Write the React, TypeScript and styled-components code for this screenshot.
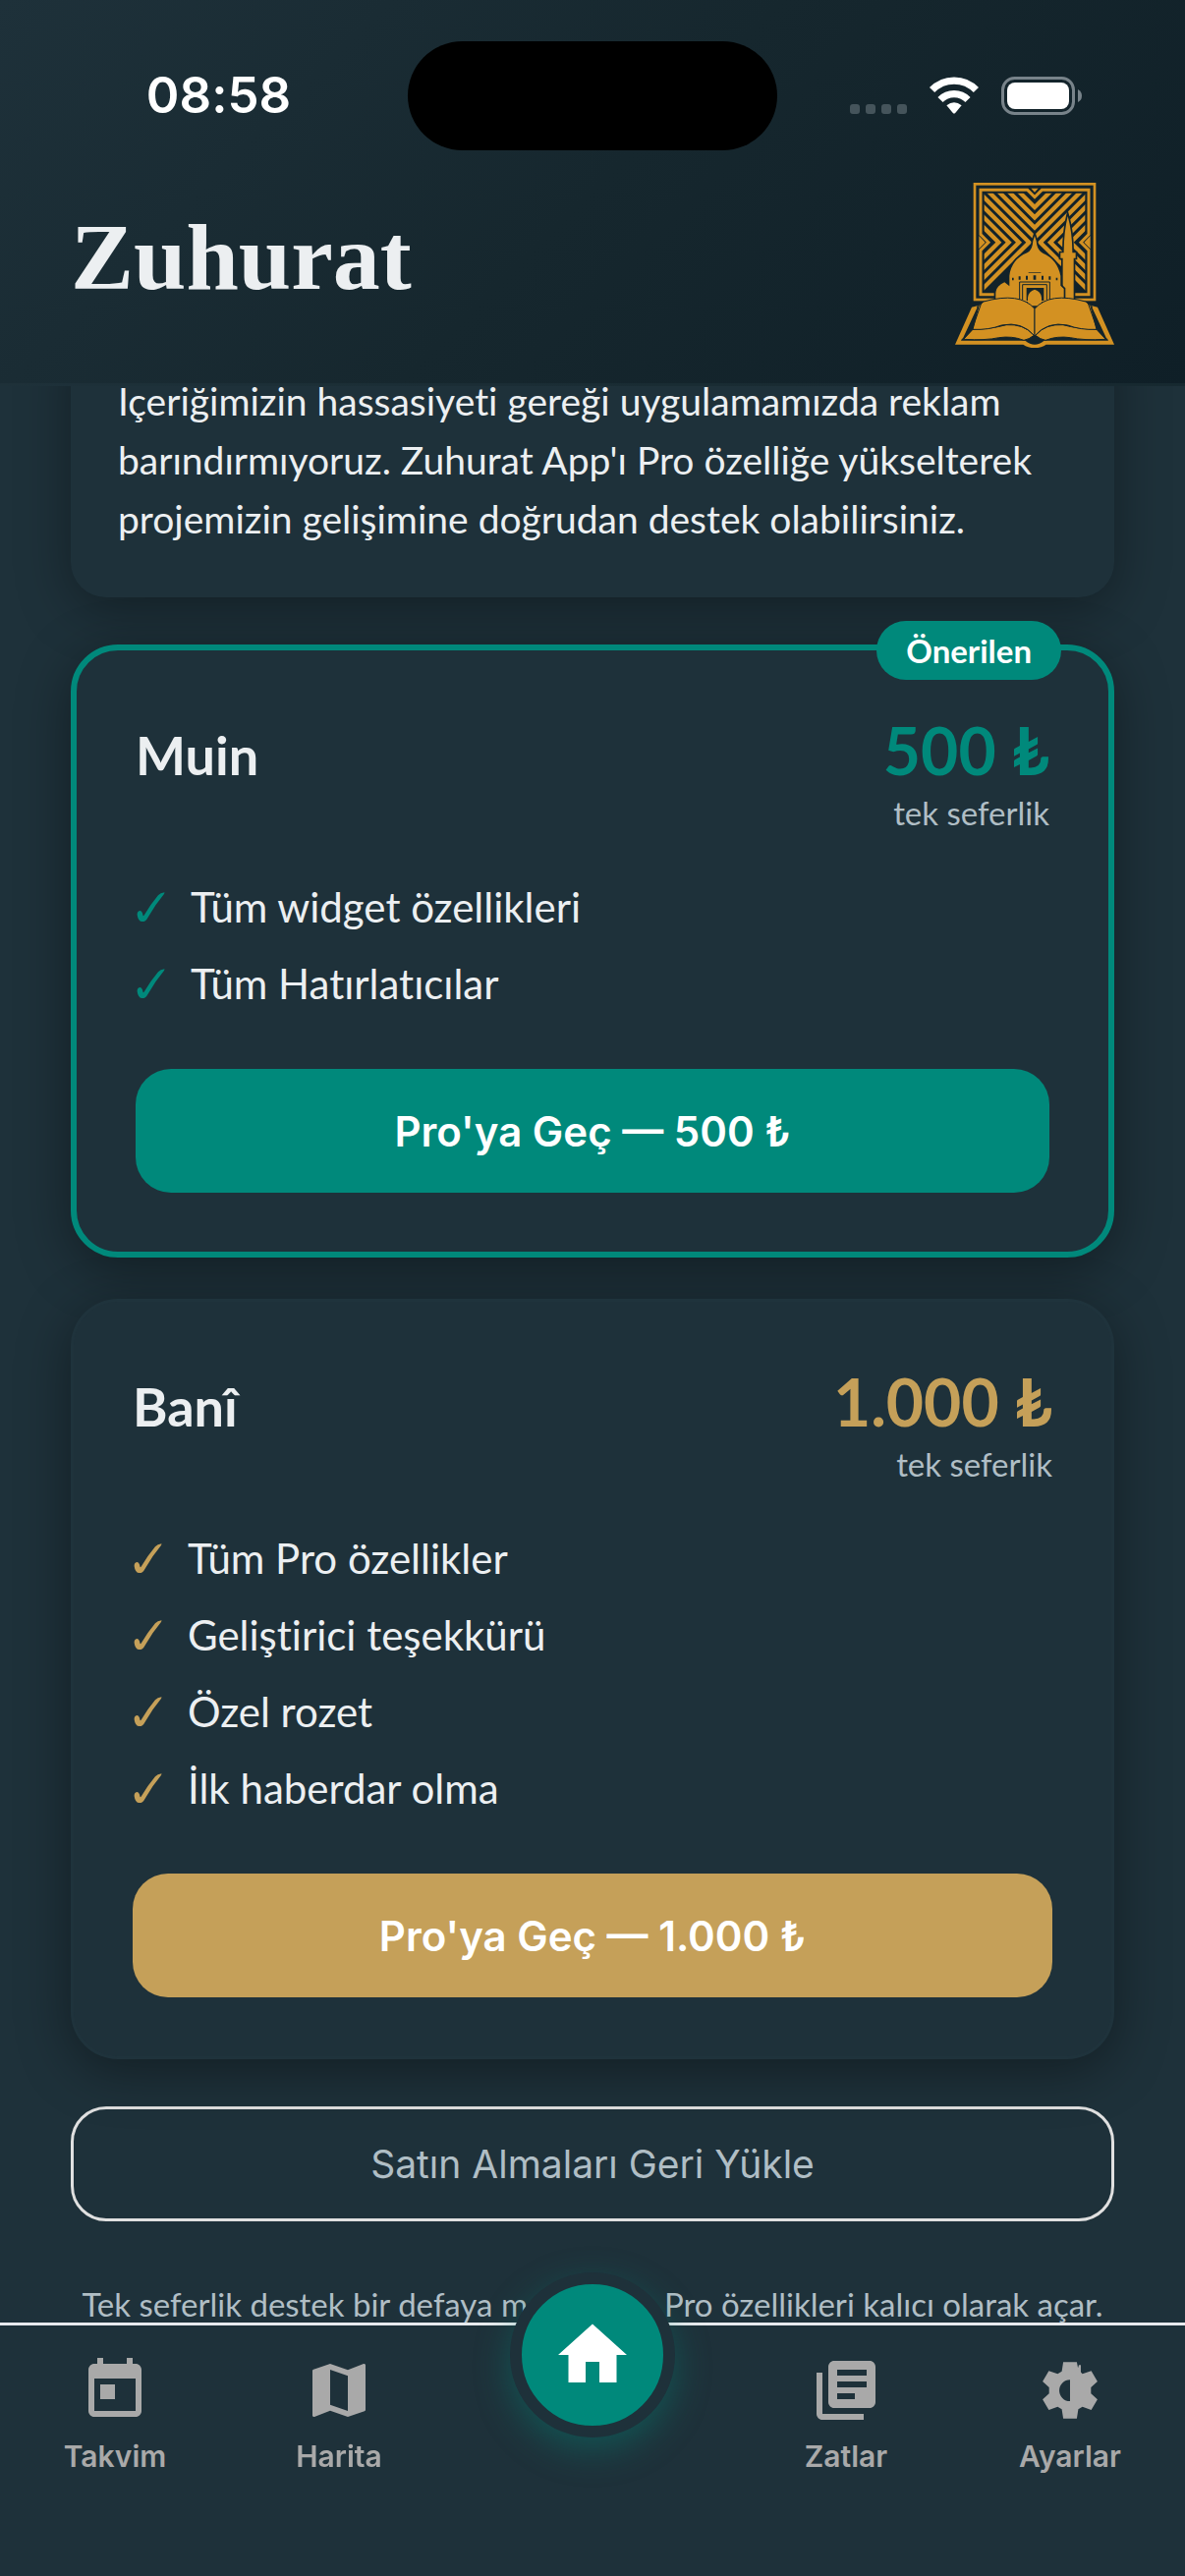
import React from "react";
import styled, { createGlobalStyle } from "styled-components";

const color = {
  surface: "#1e313a",
  text: "#eceff1",
  muted: "#b0bec5",
  teal: "#00897b",
  gold: "#c5a059",
  line: "#e0e0e0",
  tab: "#a9a9a9",
  emblem: "#d39122",
  night: "#13242b",
};

const bodyFont = `Lato, "Open Sans", "DejaVu Sans", sans-serif`;
const uiFont = `Inter, Roboto, "DejaVu Sans", sans-serif`;

const GlobalStyle = createGlobalStyle`
  * { box-sizing: border-box; }
  body {
    margin: 0;
    background: ${color.surface};
    color: ${color.text};
    font-family: ${bodyFont};
    font-variant-ligatures: none;
  }
  h1, h2, p, ul { margin: 0; padding: 0; }
  button { border: 0; cursor: pointer; }
`;

/* ---------- Header ---------- */

const Header = styled.header`
  position: fixed;
  inset: 0 0 auto 0;
  z-index: 2;
  padding-bottom: 36px;
  border-bottom: 3px solid rgba(30, 49, 58, 0.4);
  background: linear-gradient(135deg, #1e313a 0%, #16272e 50%, #0f1f27 100%);
`;

const StatusBar = styled.div`
  display: grid;
  grid-template-columns: 1fr 376px 1fr;
  align-items: center;
  height: 186px;
  padding-top: 8px;
  font-family: ${uiFont};
`;

const Clock = styled.time`
  justify-self: center;
  padding-left: 30px;
  font-size: 51px;
  font-weight: 600;
  line-height: 60px;
  color: #fff;
`;

const Island = styled.div`
  height: 111px;
  border-radius: 56px;
  background: #000;
`;

const StatusIcons = styled.div`
  display: flex;
  align-items: center;
  gap: 22px;
  padding-left: 74px;
`;

const TitleRow = styled.div`
  display: flex;
  align-items: center;
  justify-content: space-between;
  height: 168px;
  padding: 0 72px;
`;

const Title = styled.h1`
  padding-bottom: 16px;
  font-family: "Liberation Serif", serif;
  font-size: 96px;
  font-weight: 700;
  line-height: 120px;
`;

/* ---------- Content ---------- */

const Content = styled.main`
  display: flex;
  flex-direction: column;
  gap: 48px;
  padding: 330px 72px 0;
`;

const Intro = styled.section`
  padding: 48px 48px 50px;
  border-radius: 36px;
  background: ${color.surface};
  box-shadow: 0 12px 54px rgba(0, 0, 0, 0.35);
  font-size: 39px;
  line-height: 60px;
`;

const Plans = styled.div`
  display: flex;
  flex-direction: column;
  gap: 42px;
`;

const PlanCard = styled.section<{ $featured?: boolean }>`
  position: relative;
  padding: 60px;
  border: ${(p) => (p.$featured ? `6px solid ${color.teal}` : "3px solid rgba(38, 56, 65, 0.3)")};
  border-radius: 48px;
  background: ${color.surface};
  box-shadow: 0 12px 54px rgba(0, 0, 0, 0.38);
`;

const Badge = styled.span`
  position: absolute;
  top: -30px;
  right: 48px;
  padding: 0 30px;
  border-radius: 30px;
  background: ${color.teal};
  color: #fff;
  font-size: 33px;
  font-weight: 700;
  line-height: 60px;
`;

const PlanHead = styled.div`
  display: flex;
  align-items: baseline;
  justify-content: space-between;
  height: 126px;
`;

const PlanName = styled.h2`
  font-size: 54px;
  font-weight: 700;
  line-height: 68px;
`;

const PriceBox = styled.div`
  text-align: right;
`;

const Price = styled.p<{ $accent: string }>`
  color: ${(p) => p.$accent};
  font-size: 66px;
  font-weight: 700;
  line-height: 84px;
`;

const Period = styled.p`
  color: ${color.muted};
  font-size: 33px;
  line-height: 42px;
`;

const Features = styled.ul`
  display: flex;
  flex-direction: column;
  gap: 24px;
  margin: 48px 0 60px;
  list-style: none;
`;

const Feature = styled.li`
  display: grid;
  grid-template-columns: 32px 1fr;
  align-items: center;
  gap: 24px;
  font-size: 42px;
  line-height: 54px;
`;

const BuyButton = styled.button<{ $accent: string }>`
  display: block;
  width: 100%;
  height: 126px;
  border-radius: 36px;
  background: ${(p) => p.$accent};
  color: #fff;
  font-family: ${uiFont};
  font-size: 42px;
  font-weight: 600;
`;

const RestoreButton = styled.button`
  height: 117px;
  && { border: 3px solid ${color.line}; }
  border-radius: 36px;
  background: transparent;
  color: ${color.muted};
  font-family: ${uiFont};
  font-size: 39px;
`;

const Footnote = styled.p`
  padding-top: 15px;
  margin: 0 -24px;
  color: ${color.muted};
  font-size: 33px;
  line-height: 42px;
  text-align: center;
  white-space: nowrap;
`;

/* ---------- Tab bar ---------- */

const TabBar = styled.nav`
  position: fixed;
  inset: auto 0 0 0;
  z-index: 2;
  display: grid;
  grid-template-columns: 1fr 1fr 288px 1fr 1fr;
  justify-items: center;
  align-items: start;
  height: 258px;
  padding: 0 3px;
  border-top: 3px solid #e8eaed;
  background: ${color.surface};
`;

const Tab = styled.a`
  display: flex;
  flex-direction: column;
  align-items: center;
  gap: 12px;
  padding-top: 30px;
  color: ${color.tab};
  font-family: ${uiFont};
  font-size: 30px;
  font-weight: 600;
  line-height: 39px;
  text-decoration: none;
`;

const HomeButton = styled.button`
  display: grid;
  place-items: center;
  width: 168px;
  height: 168px;
  margin-top: -54px;
  padding: 0;
  && { border: 12px solid ${color.surface}; }
  border-radius: 50%;
  background: ${color.teal};
  box-shadow: 0 12px 36px rgba(0, 137, 123, 0.4);
`;

/* ---------- Drawings ---------- */

const Glyph = ({ d, size = 72, fill = "currentColor" }: { d: string; size?: number; fill?: string }) => (
  <svg width={size} height={size} viewBox="0 0 24 24" fill={fill} aria-hidden="true">
    <path d={d} />
  </svg>
);

const icons = {
  calendar:
    "M19 3h-1V1h-2v2H8V1H6v2H5c-1.11 0-1.99.9-1.99 2L3 19c0 1.1.89 2 2 2h14c1.1 0 2-.9 2-2V5c0-1.1-.9-2-2-2zm0 16H5V8h14v11zM7 10h5v5H7z",
  map: "M20.5 3l-.16.03L15 5.1 9 3 3.36 4.9c-.21.07-.36.25-.36.48V20.5c0 .28.22.5.5.5l.16-.03L9 18.9l6 2.1 5.64-1.9c.21-.07.36-.25.36-.48V3.5c0-.28-.22-.5-.5-.5zM15 19l-6-2.11V5l6 2.11V19z",
  home: "M10 20v-6h4v6h5v-8h3L12 3 2 12h3v8z",
  library:
    "M4 6H2v14c0 1.1.9 2 2 2h14v-2H4V6zm16-4H8c-1.1 0-2 .9-2 2v12c0 1.1.9 2 2 2h12c1.1 0 2-.9 2-2V4c0-1.1-.9-2-2-2zm-1 5H9V5h10v2zm-4 8H9v-2h6v2zm4-4H9V9h10v2z",
  settings:
    "M9.7 2.4H14.3L14.7 4.4 15 3.4H15.65V5.8L16.2 6.4 19.2 5.4 21.3 9 19.1 11V13.1L21.3 15.1 19.2 18.7 16.2 17.6 14.8 18.4 14.3 21.6H9.7L9.2 18.4 7.8 17.6 4.8 18.7 2.7 15.1 4.9 13.1V11L2.7 9 4.8 5.4 7.8 6.4 9.2 5.6ZM12 8.4a3.65 3.65 0 0 0 0 7.3z",
};

const Tick = ({ accent }: { accent: string }) => (
  <svg width="32" height="32" viewBox="0 0 99 99" fill={accent} role="img" aria-label="✓">
    <path d="M5 74Q5 64 13 62Q21 62 23 76Q24 80 27 76Q48 40 71 13Q78 5 91 4Q92 6 89 10Q62 42 38 84Q32 96 21 96Q8 96 5 74Z" />
  </svg>
);

const Signal = () => (
  <svg width="58" height="38" viewBox="0 0 58 38" fill="#45545b" aria-hidden="true">
    {[0, 16, 32, 48].map((x) => (
      <rect key={x} x={x} y="28" width="10" height="10" rx="3" />
    ))}
  </svg>
);

const Wifi = () => (
  <svg width="52" height="38" viewBox="0 0 52 38" aria-hidden="true">
    <g fill="none" stroke="#fff" strokeWidth="7.2">
      <path d="M3.6 13.6A31 31 0 0 1 48.4 13.6" />
      <path d="M12 23.6A19.6 19.6 0 0 1 40 23.6" />
    </g>
    <path d="M18.4 29.2Q26 23.4 33.6 29.2L27.2 37Q26 38 24.8 37Z" fill="#fff" />
  </svg>
);

const Battery = () => (
  <svg width="82" height="39" viewBox="0 0 82 39" aria-hidden="true">
    <rect x="1.5" y="1.5" width="72" height="36" rx="12" fill="none" stroke="#78838a" strokeWidth="3" />
    <rect x="6" y="6" width="63" height="27" rx="8" fill="#fff" />
    <path d="M78 13Q82 15 82 19.5T78 26Z" fill="#78838a" />
  </svg>
);

/* Lattice lines run at 45° and fold at the centre column and the middle row. */
const latticeV = [123, 154, 185, 216].map((y) => `M${309 - y} 0L309 ${y}L${309 + y} 0`);
const latticeSide = [292, 261, 230, 199].map(
  (x) =>
    `M${x - 230} 0L${x} 230L${x - 230} 460M${618 - x + 230} 0L${618 - x} 230L${618 - x + 230} 460`,
);

const Emblem = () => (
  <svg width="162" height="168" viewBox="66 48 486 504" role="img" aria-label="Zuhurat">
    <clipPath id="lattice">
      <path d="M155 80H463V379H155Z" />
    </clipPath>
    <g fill="none" stroke={color.emblem}>
      <rect x="126" y="52" width="366" height="353" strokeWidth="8" />
      <path
        d="M144 70H287L309 92L331 70H474V206L450 230L474 254V389H144V254L168 230L144 206Z"
        strokeWidth="9"
      />
      <path clipPath="url(#lattice)" d={[...latticeV, ...latticeSide].join("")} strokeWidth="13" />
    </g>
    <g fill={color.emblem}>
      <path d="M298 65H320L309 77Z" />
      <path d="M139 210L158 230L139 250ZM479 210L460 230L479 250Z" />
    </g>
    <g fill={color.emblem} stroke={color.night} strokeWidth="10" paintOrder="stroke">
      <path d="M410 150Q398 200 398 262H388V278H395V410H428V278H434V262H424Q424 200 410 150Z" />
      <path d="M190 412V385Q192 362 217 352L232 364V332Q238 282 286 262Q302 254 304 226L309 210L314 226Q316 254 334 263Q378 282 388 332V362L398 372V412Z" />
    </g>
    <g fill={color.night}>
      <path d="M240 338h5v8h-5zM260 334h6v10h-6zM282 332h6v12h-6zM305 331h8v13h-8zM330 332h6v12h-6zM352 334h6v10h-6zM374 338h5v8h-5z" />
      <path d="M290 321h38v2h-38z" />
    </g>
    <g fill="none" stroke={color.night}>
      <path d="M263 406V351H355V406" strokeWidth="3" />
      <path d="M272 406V359H346V406" strokeWidth="3" />
    </g>
    <path d="M284 408V369H337V408Z" fill={color.night} />
    <path d="M288 420V398Q290 380 309 374Q328 380 330 398V420L309 436Z" fill={color.emblem} />
    {/* Open book */}
    <g fill={color.emblem} stroke={color.night} strokeWidth="4" strokeLinejoin="round" paintOrder="stroke">
      <path d="M117 428L66 542H274Q288 552 309 552Q330 552 344 542H552L501 428L470 420L309 480L148 420Z" />
    </g>
    <path d="M134 424L84 530H280Q309 554 338 530H534L484 424Z" fill={color.night} />
    <path d="M126 428H134L90 523L84 526ZM492 428H484L528 523L534 526Z" fill={color.emblem} />
    <g fill={color.emblem} stroke={color.night} strokeWidth="3" strokeLinejoin="round">
      <path d="M92 526L120 496Q180 494 222 482Q276 478 307 514Q292 526 276 529Q240 515 200 521Q160 530 92 526Z" />
      <path d="M526 526L498 496Q438 494 396 482Q342 478 311 514Q326 526 342 529Q378 515 418 521Q458 530 526 526Z" />
      <path d="M153 411Q264 380 309 433V516Q270 470 208 483Q170 498 120 496L138 424Z" />
      <path d="M465 411Q354 380 309 433V516Q348 470 410 483Q448 498 498 496L480 424Z" />
      <path d="M146 416L118 496L98 516M472 416L500 496L520 516" fill="none" />
    </g>
  </svg>
);

/* ---------- Screen ---------- */

type Plan = {
  name: string;
  price: string;
  accent: string;
  features: string[];
  featured?: boolean;
};

const plans: Plan[] = [
  {
    name: "Muin",
    price: "500 ₺",
    accent: color.teal,
    features: ["Tüm widget özellikleri", "Tüm Hatırlatıcılar"],
    featured: true,
  },
  {
    name: "Banî",
    price: "1.000 ₺",
    accent: color.gold,
    features: ["Tüm Pro özellikler", "Geliştirici teşekkürü", "Özel rozet", "İlk haberdar olma"],
  },
];

const PlanOffer = ({ plan }: { plan: Plan }) => (
  <PlanCard $featured={plan.featured}>
    {plan.featured && <Badge>Önerilen</Badge>}
    <PlanHead>
      <PlanName>{plan.name}</PlanName>
      <PriceBox>
        <Price $accent={plan.accent}>{plan.price}</Price>
        <Period>tek seferlik</Period>
      </PriceBox>
    </PlanHead>
    <Features>
      {plan.features.map((f) => (
        <Feature key={f}>
          <Tick accent={plan.accent} />
          <span>{f}</span>
        </Feature>
      ))}
    </Features>
    <BuyButton type="button" $accent={plan.accent}>
      Pro'ya Geç — {plan.price}
    </BuyButton>
  </PlanCard>
);

export default function App() {
  return (
    <>
      <GlobalStyle />
      <Header>
        <StatusBar>
          <Clock>08:58</Clock>
          <Island />
          <StatusIcons>
            <Signal />
            <Wifi />
            <Battery />
          </StatusIcons>
        </StatusBar>
        <TitleRow>
          <Title>Zuhurat</Title>
          <Emblem />
        </TitleRow>
      </Header>

      <Content>
        <Intro>
          <p>
            İçeriğimizin hassasiyeti gereği uygulamamızda reklam barındırmıyoruz. Zuhurat App'ı Pro
            özelliğe yükselterek projemizin gelişimine doğrudan destek olabilirsiniz.
          </p>
        </Intro>
        <Plans>
          {plans.map((plan) => (
            <PlanOffer key={plan.name} plan={plan} />
          ))}
        </Plans>
        <RestoreButton type="button">Satın Almaları Geri Yükle</RestoreButton>
        <Footnote>
          Tek seferlik destek bir defaya mahsustur. Pro özellikleri kalıcı olarak açar.
        </Footnote>
      </Content>

      <TabBar>
        <Tab href="#takvim">
          <Glyph d={icons.calendar} />
          Takvim
        </Tab>
        <Tab href="#harita">
          <Glyph d={icons.map} />
          Harita
        </Tab>
        <HomeButton type="button" aria-label="Ana sayfa">
          <Glyph d={icons.home} size={84} fill="#fff" />
        </HomeButton>
        <Tab href="#zatlar">
          <Glyph d={icons.library} />
          Zatlar
        </Tab>
        <Tab href="#ayarlar">
          <Glyph d={icons.settings} />
          Ayarlar
        </Tab>
      </TabBar>
    </>
  );
}
